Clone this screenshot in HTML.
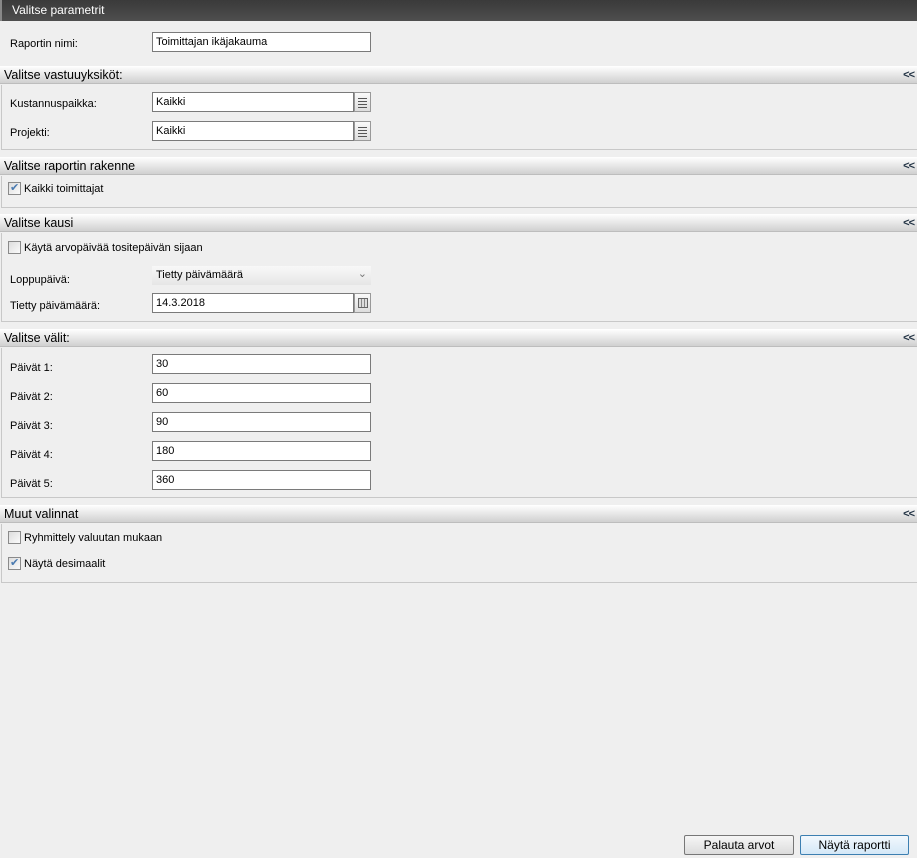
<!DOCTYPE html>
<html><head><meta charset="utf-8"><style>
*{box-sizing:border-box;margin:0;padding:0}
body{width:917px;height:858px;background:#efefef;font-family:"Liberation Sans",sans-serif;font-size:11px;color:#000;position:relative;overflow:hidden}
.a{position:absolute}
.title{left:0;top:0;width:917px;height:21px;background:linear-gradient(#3a3a3a,#4e4e4e);color:#fff;font-size:12px;line-height:20px;padding-left:10px;border-left:2px solid #888}
.hdr{left:0;width:917px;height:18px;background:linear-gradient(#fff,#d0d0d0);border-bottom:1px solid #bdbdbd;line-height:18px;padding-left:4px;font-size:12.5px}
.hdr span{position:absolute;right:3px;top:0;font-size:11px;font-weight:bold;color:#234;letter-spacing:-1px}
.box{left:1px;width:916px;border-left:1px solid #c8c8c8;border-bottom:1px solid #c8c8c8}
.lbl{left:10px;font-size:11px}
.inp{left:152px;width:219px;height:20px;background:#fff;border:1px solid #7a7a7a;padding-left:3px;line-height:18px;font-size:11px}
.inp.s{width:202px}
.btn{left:354px;width:17px;height:20px;border:1px solid #999;background:linear-gradient(#fafafa,#ddd)}
.btn i{position:absolute;left:3px;width:9px;height:1px;background:#555}
.cb{width:13px;height:13px;border:1px solid #8a8a8a;background:linear-gradient(135deg,#ddd,#fafafa)}
.cb.c::after{content:"✔";position:absolute;left:1px;top:-2px;font-size:11px;color:#4a7ab0}
.pb{height:20px;border:1px solid #777;border-radius:2px;background:linear-gradient(#f6f6f6,#dcdcdc);text-align:center;line-height:18px;font-size:12px}
</style></head><body>
<div class="a title">Valitse parametrit</div>
<div class="a lbl" style="top:38px">Raportin nimi:</div>
<div class="a inp" style="top:32px">Toimittajan ikäjakauma</div>

<div class="a hdr" style="top:66px">Valitse vastuuyksiköt:<span>&lt;&lt;</span></div>
<div class="a box" style="top:85px;height:65px"></div>
<div class="a lbl" style="top:98px">Kustannuspaikka:</div>
<div class="a inp s" style="top:92px">Kaikki</div>
<div class="a btn" style="top:92px"><i style="top:5px"></i><i style="top:8px"></i><i style="top:11px"></i><i style="top:14px"></i></div>
<div class="a lbl" style="top:127px">Projekti:</div>
<div class="a inp s" style="top:121px">Kaikki</div>
<div class="a btn" style="top:121px"><i style="top:5px"></i><i style="top:8px"></i><i style="top:11px"></i><i style="top:14px"></i></div>

<div class="a hdr" style="top:157px">Valitse raportin rakenne<span>&lt;&lt;</span></div>
<div class="a box" style="top:176px;height:32px"></div>
<div class="a cb c" style="left:8px;top:182px"></div>
<div class="a" style="left:24px;top:183px">Kaikki toimittajat</div>

<div class="a hdr" style="top:214px">Valitse kausi<span>&lt;&lt;</span></div>
<div class="a box" style="top:233px;height:89px"></div>
<div class="a cb" style="left:8px;top:241px"></div>
<div class="a" style="left:24px;top:242px">Käytä arvopäivää tositepäivän sijaan</div>
<div class="a lbl" style="top:274px">Loppupäivä:</div>
<div class="a" style="left:152px;top:266px;width:219px;height:19px;background:linear-gradient(#f8f8f8,#e6e6e6);padding-left:4px;line-height:18px">Tietty päivämäärä<span style="position:absolute;right:4px;top:-1px;color:#777;font-size:11px">&#8964;</span></div>
<div class="a lbl" style="top:300px">Tietty päivämäärä:</div>
<div class="a inp s" style="top:293px">14.3.2018</div>
<div class="a btn" style="top:293px"><div style="position:absolute;left:3px;top:4px;width:10px;height:10px;border:1px solid #666;background:repeating-linear-gradient(90deg,#ddd 0 2px,#888 2px 3px)"></div></div>

<div class="a hdr" style="top:329px">Valitse välit:<span>&lt;&lt;</span></div>
<div class="a box" style="top:348px;height:150px"></div>
<div class="a lbl" style="top:362px">Päivät 1:</div><div class="a inp" style="top:354px">30</div>
<div class="a lbl" style="top:391px">Päivät 2:</div><div class="a inp" style="top:383px">60</div>
<div class="a lbl" style="top:420px">Päivät 3:</div><div class="a inp" style="top:412px">90</div>
<div class="a lbl" style="top:449px">Päivät 4:</div><div class="a inp" style="top:441px">180</div>
<div class="a lbl" style="top:478px">Päivät 5:</div><div class="a inp" style="top:470px">360</div>

<div class="a hdr" style="top:505px">Muut valinnat<span>&lt;&lt;</span></div>
<div class="a box" style="top:524px;height:59px"></div>
<div class="a cb" style="left:8px;top:531px"></div>
<div class="a" style="left:24px;top:532px">Ryhmittely valuutan mukaan</div>
<div class="a cb c" style="left:8px;top:557px"></div>
<div class="a" style="left:24px;top:558px">Näytä desimaalit</div>

<div class="a pb" style="left:684px;top:835px;width:110px">Palauta arvot</div>
<div class="a pb" style="left:800px;top:835px;width:109px;border-color:#3c7fb1;background:linear-gradient(#f2f8fd,#d4e8f7)">Näytä raportti</div>
</body></html>
